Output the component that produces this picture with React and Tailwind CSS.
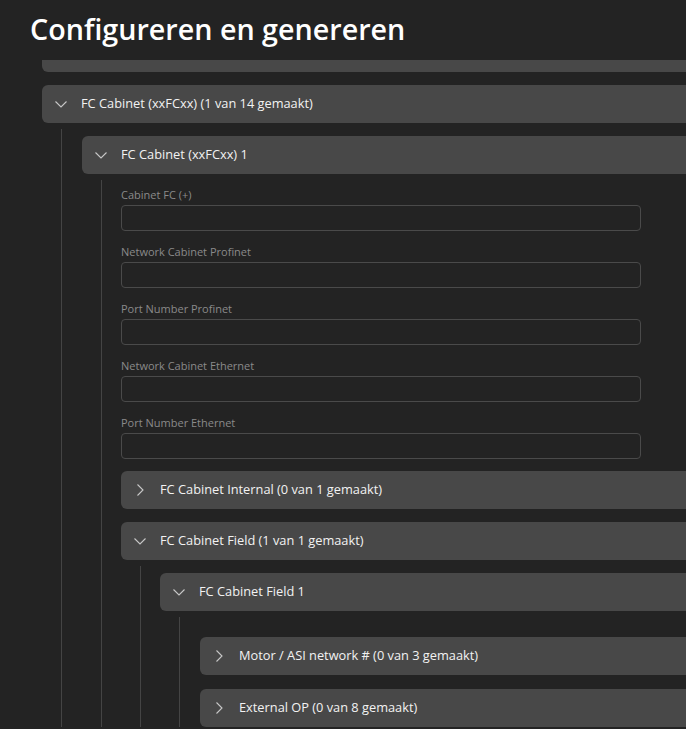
import React from 'react';

const font = { fontFamily: '"Open Sans", "Noto Sans", sans-serif' };

function Chevron({ open }) {
  return (
    <span className="flex w-[12px] h-[12px] items-center justify-center shrink-0">
      {open ? (
        <svg width="12" height="7" viewBox="0 0 12 7" fill="none">
          <path d="M0.5 0.5 L6 6 L11.5 0.5" stroke="#c8c8c8" strokeWidth="1.1" />
        </svg>
      ) : (
        <svg width="7" height="12" viewBox="0 0 7 12" fill="none">
          <path d="M0.5 0.5 L6 6 L0.5 11.5" stroke="#c8c8c8" strokeWidth="1.1" />
        </svg>
      )}
    </span>
  );
}

function Bar({ title, open }) {
  return (
    <div className="flex items-center h-[38px] bg-[#484848] rounded-l-[6px] pl-[13px] gap-[14px] text-[12.8px] text-[#f2f2f2]">
      <Chevron open={open} />
      <span className="whitespace-nowrap">{title}</span>
    </div>
  );
}

function Section({ title, open, children, padTop = 'pt-[7px]', wide, gap = 'mb-[13px]' }) {
  return (
    <div className={gap}>
      <Bar title={title} open={open} />
      {open && (
        <div
          className={`mt-[6px] ml-[19px] border-l border-[#444444] ${wide ? 'pl-[20px]' : 'pl-[19px]'} ${padTop}`}
        >
          {children}
        </div>
      )}
    </div>
  );
}

function Field({ label, last }) {
  return (
    <div className={`${last ? 'mb-[12px]' : 'mb-[15px]'} w-[520px]`}>
      <div className="text-[11px] leading-[12px] mb-[4px] text-[#8a8a8a]">{label}</div>
      <div className="h-[26px] rounded-[4px] border border-[#4a4a4a] bg-[#232323]" />
    </div>
  );
}

export default function App() {
  return (
    <div className="w-[686px] h-[729px] overflow-hidden bg-[#232323]" style={font}>
      {/* Header */}
      <div className="h-[60px] flex items-center pl-[30px] relative z-10 bg-[#232323]">
        <h1 className="text-[28.7px] font-semibold text-white leading-none pb-[2px]">
          Configureren en genereren
        </h1>
      </div>

      {/* Scroll area */}
      <div className="h-[669px] overflow-hidden">
        <div className="w-[900px] pl-[42px] -mt-[26px]">
          <div className="mb-[13px]">
            <Bar title="" open={false} />
          </div>
          <Section title="FC Cabinet (xxFCxx) (1 van 14 gemaakt)" open wide>
            <Section title="FC Cabinet (xxFCxx) 1" open padTop="pt-[9px]">
              <Field label="Cabinet FC (+)" />
              <Field label="Network Cabinet Profinet" />
              <Field label="Port Number Profinet" />
              <Field label="Network Cabinet Ethernet" />
              <Field label="Port Number Ethernet" last />
              <Section title="FC Cabinet Internal (0 van 1 gemaakt)" open={false} />
              <Section title="FC Cabinet Field (1 van 1 gemaakt)" open>
                <Section title="FC Cabinet Field 1" open wide padTop="pt-[20px]">
                  <Section title="Motor / ASI network # (0 van 3 gemaakt)" open={false} gap="mb-[14px]" />
                  <Section title="External OP (0 van 8 gemaakt)" open={false} />
                </Section>
              </Section>
            </Section>
          </Section>
        </div>
      </div>
    </div>
  );
}
